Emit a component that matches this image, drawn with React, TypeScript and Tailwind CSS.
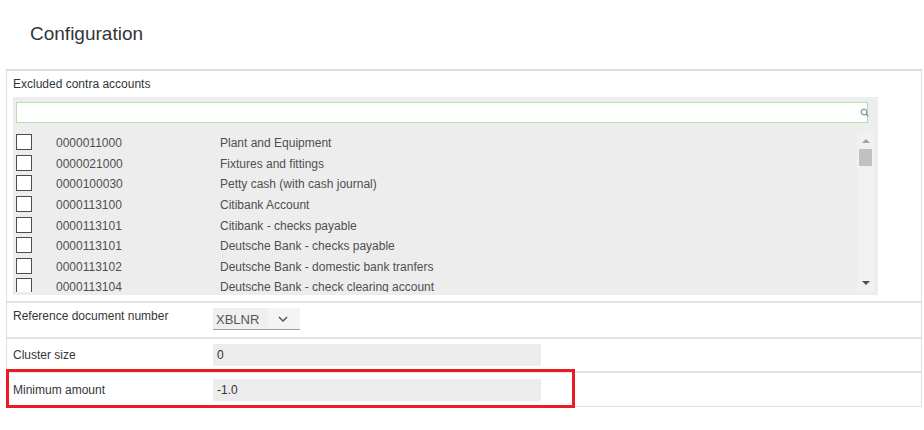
import React from 'react';

const accounts: [string, string][] = [
  ['0000011000', 'Plant and Equipment'],
  ['0000021000', 'Fixtures and fittings'],
  ['0000100030', 'Petty cash (with cash journal)'],
  ['0000113100', 'Citibank Account'],
  ['0000113101', 'Citibank - checks payable'],
  ['0000113101', 'Deutsche Bank - checks payable'],
  ['0000113102', 'Deutsche Bank - domestic bank tranfers'],
  ['0000113104', 'Deutsche Bank - check clearing account'],
];

const SearchIcon = () => (
  <svg width="9" height="9" viewBox="0 0 9 9" className="absolute right-[-2px] top-[5px]">
    <circle cx="4" cy="4" r="2.8" fill="none" stroke="#7d97a6" strokeWidth="1.2" />
    <path d="M6 6 L8.2 8.2" stroke="#7d97a6" strokeWidth="1.4" />
  </svg>
);

const Chevron = () => (
  <svg width="10" height="6" viewBox="0 0 10 6">
    <path d="M1 1 L5 5 L9 1" fill="none" stroke="#555" strokeWidth="1.5" />
  </svg>
);

const AccountRow = ({ code, name }: { code: string; name: string }) => (
  <div className="flex items-center h-[20.57px] shrink-0 text-[12px] text-[#4f4f4f]">
    <span className="w-[16px] h-[16px] border border-[#4d4d4d] bg-white shrink-0" />
    <span className="ml-[24px] mt-[2px] w-[164px]">{code}</span>
    <span className="mt-[2px]">{name}</span>
  </div>
);

export default function App() {
  return (
    <div className="w-[924px] h-[430px] bg-white relative font-['Liberation_Sans',Arial,sans-serif] text-[#32363a]">
      <div className="h-[69px] pt-[23px] pl-[30px] text-[19px] leading-[22px]">Configuration</div>

      <div className="ml-[6px] w-[916px] border-t-2 border-t-[#d9dce1] border-x border-x-[#e0e0e0]">
        {/* excluded contra accounts */}
        <div className="pt-[5px] pl-[6px] pb-[6px] border-b-2 border-b-[#e3e3e3]">
          <div className="text-[12px] leading-[16px]">Excluded contra accounts</div>
          <div className="mt-[5px] w-[865px] h-[198px] bg-[#ededed] pt-[5px] pl-[3px] pr-[4px]">
            <div className="relative w-[852px] h-[21px] border border-[#b7dfa9] bg-white">
              <SearchIcon />
            </div>
            <div className="mt-[9px] h-[160px] flex">
              <div className="flex-1 flex flex-col overflow-hidden">
                {accounts.map(([c, n], i) => (
                  <AccountRow key={i} code={c} name={n} />
                ))}
              </div>
              <div className="w-[17px] bg-[#f1f1f1] flex flex-col items-center">
                <div className="mt-[7px] w-0 h-0 border-x-[4px] border-x-transparent border-b-[4px] border-b-[#a3a3a3]" />
                <div className="mt-[6px] w-[13px] h-[17px] bg-[#c1c1c1]" />
                <div className="flex-1" />
                <div className="mb-[7px] w-0 h-0 border-x-[4px] border-x-transparent border-t-[4px] border-t-[#505050]" />
              </div>
            </div>
          </div>
        </div>

        {/* reference document number */}
        <div className="h-[36px] flex pl-[6px] border-b-2 border-b-[#e3e3e3]">
          <div className="w-[200px] pt-[5px] text-[12px] leading-[16px]">Reference document number</div>
          <div className="pt-[5px]">
            <div className="flex h-[22px] w-[87px] border-b border-b-[#8fa2b1]">
              <div className="w-[55px] bg-[#efefef] pl-[3px] pt-[1px] text-[13px] leading-[21px] text-[#555]">XBLNR</div>
              <div className="flex-1 bg-[#f4f4f4] flex items-center justify-center pr-[2px] pt-[1px]">
                <Chevron />
              </div>
            </div>
          </div>
        </div>

        {/* cluster size */}
        <div className="h-[34px] flex pl-[6px] border-b-2 border-b-[#e3e3e3]">
          <div className="w-[200px] pt-[8px] text-[12px] leading-[16px]">Cluster size</div>
          <div className="pt-[5px]">
            <div className="w-[328px] h-[22px] bg-[#ececec] pl-[4px] text-[12px] leading-[22px] text-[#333]">0</div>
          </div>
        </div>

        {/* minimum amount */}
        <div className="h-[34px] flex pl-[6px] border-b border-b-[#e0e0e0]">
          <div className="w-[200px] pt-[9px] text-[12px] leading-[16px]">Minimum amount</div>
          <div className="pt-[6px]">
            <div className="w-[328px] h-[22px] bg-[#ececec] pl-[4px] text-[12px] leading-[22px] text-[#333]">-1.0</div>
          </div>
        </div>
      </div>

      {/* highlight annotation */}
      <div className="absolute left-[6px] top-[369px] w-[569px] h-[39px] border-[3px] border-[#ed1c24] pointer-events-none" />
    </div>
  );
}
